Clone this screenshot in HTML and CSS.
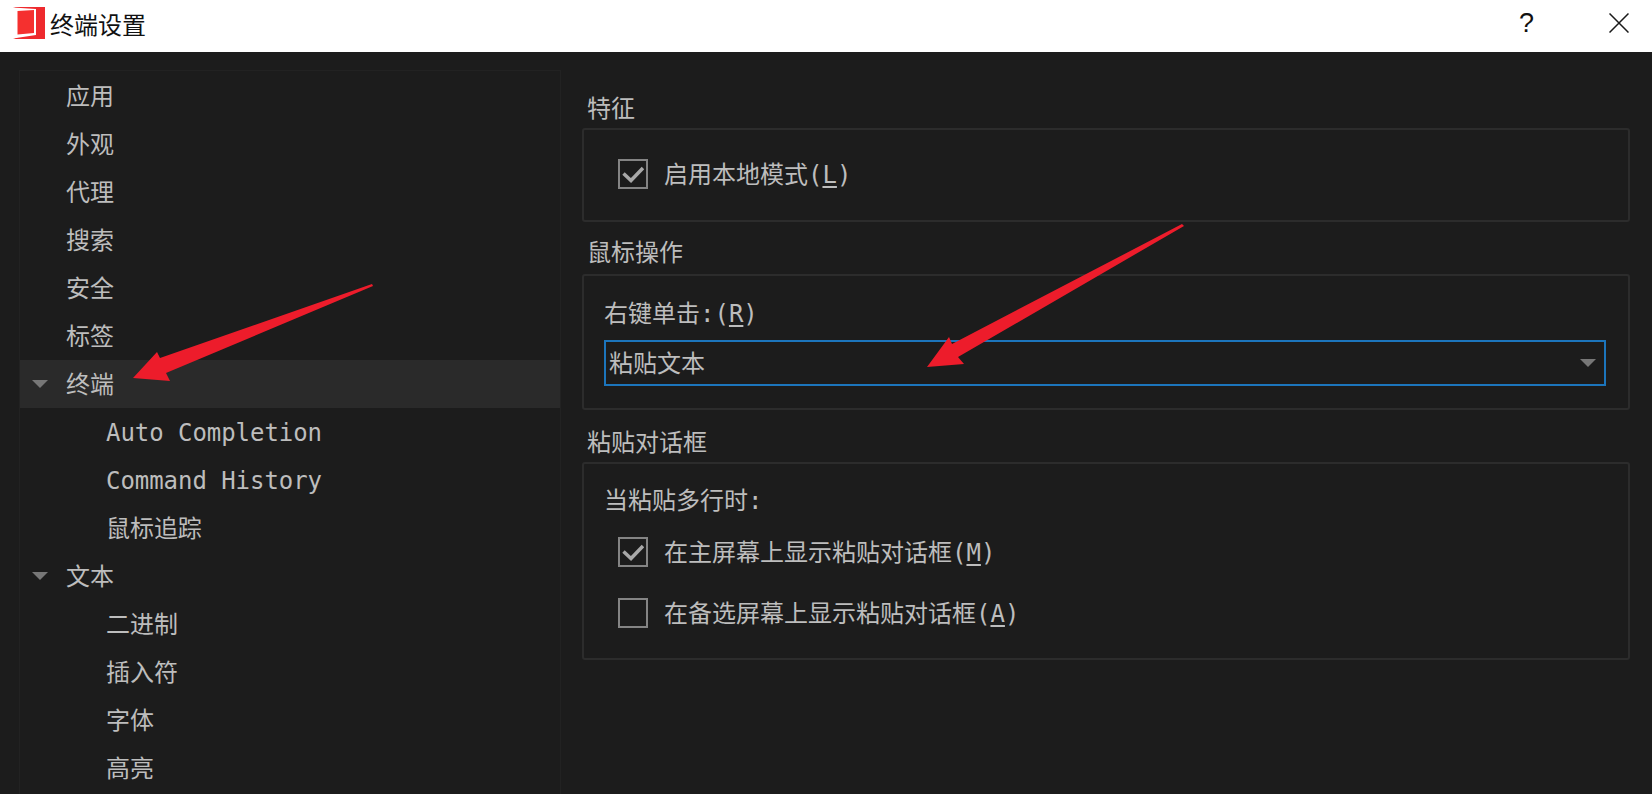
FILE: index.html
```html
<!DOCTYPE html>
<html>
<head>
	<meta charset="utf-8">
	<title>终端设置</title>
	<link rel="stylesheet" href="styles.css">
</head>
<body>
  <div class="titlebar">
    <svg class="logo" width="34" height="34" viewBox="0 0 34 34">
      <path d="M1 1H33V33H1L6 31V3Z" fill="#ee2a2e"/>
      <path d="M1 1.500L24 3V29L1 32.500L5 29V4Z" fill="#ffffff"/>
      <path d="M5.500 5L22 4V27L5.500 28.500Z" fill="#f5302f"/>
    </svg>
    <span class="title">终端设置</span>
    <span class="help">?</span>
    <svg class="close" width="20" height="20" viewBox="0 0 20 20">
      <path d="M0.500 0.500L19.500 19.500M19.500 0.500L0.500 19.500" stroke="#1a1a1a" stroke-width="1.500" fill="none"/>
    </svg>
  </div>

  <div class="content">
    <ul class="tree">
      <li>应用</li>
      <li>外观</li>
      <li>代理</li>
      <li>搜索</li>
      <li>安全</li>
      <li>标签</li>
      <li class="open current">终端</li>
      <li class="sub">Auto Completion</li>
      <li class="sub">Command History</li>
      <li class="sub">鼠标追踪</li>
      <li class="open">文本</li>
      <li class="sub">二进制</li>
      <li class="sub">插入符</li>
      <li class="sub">字体</li>
      <li class="sub">高亮</li>
    </ul>

    <div class="panel">
      <div class="group-title first">特征</div>
      <div class="group group-features">
        <label class="check">
          <span class="box checked">
            <svg width="22" height="18" viewBox="0 0 22 18"><path d="M1.500 8.500L9 15.500L21 3" stroke="#a8a8a8" stroke-width="3.500" fill="none"/></svg>
          </span>
          <span class="check-text">启用本地模式(<u>L</u>)</span>
        </label>
      </div>

      <div class="group-title">鼠标操作</div>
      <div class="group group-mouse">
        <div class="field-label">右键单击:(<u>R</u>)</div>
        <div class="combo">
          <span class="combo-text">粘贴文本</span>
          <span class="combo-arrow"></span>
        </div>
      </div>

      <div class="group-title">粘贴对话框</div>
      <div class="group group-paste">
        <div class="field-label">当粘贴多行时:</div>
        <label class="check">
          <span class="box checked">
            <svg width="22" height="18" viewBox="0 0 22 18"><path d="M1.500 8.500L9 15.500L21 3" stroke="#a8a8a8" stroke-width="3.500" fill="none"/></svg>
          </span>
          <span class="check-text">在主屏幕上显示粘贴对话框(<u>M</u>)</span>
        </label>
        <label class="check">
          <span class="box"></span>
          <span class="check-text">在备选屏幕上显示粘贴对话框(<u>A</u>)</span>
        </label>
      </div>
    </div>
  </div>

  <!-- red annotation arrows drawn over the dialog -->
  <svg class="arrows" width="1652" height="794" viewBox="0 0 1652 794">
    <path d="M372 284L373 286L166 373L170 381L133 378L157 352L160 358Z" fill="#ed1c2b"/>
    <path d="M1182 224L1184 226L958 357L964 364L927 367L949 337L952 344Z" fill="#ed1c2b"/>
  </svg>
</body>
</html>
```

FILE: styles.css
```css
html, body {
	height: 794px;
	overflow: hidden;
}
body {
	font-family: "DejaVu Sans Mono", "Noto Sans CJK SC", monospace;
	font-size: 24px;
	margin: 0;
	padding: 0;
	background: #1c1c1c;
	color: #bdbdbd;
}
.titlebar {
	display: flex;
	align-items: center;
	box-sizing: border-box;
	height: 52px;
	padding-bottom: 6px;
	background: #ffffff;
	color: #111111;
}
.logo {
	margin-left: 12px;
	flex: none;
}
.title {
	margin-left: 4px;
	flex: 1;
	font-family: "Noto Sans CJK SC", sans-serif;
}
.help {
	font-family: "Liberation Sans", sans-serif;
	font-size: 27px;
	margin-right: 75px;
}
.close {
	margin-right: 23px;
}
.content {
	display: flex;
	padding: 18px 22px 0 19px;
}
.tree {
	list-style: none;
	margin: 0;
	padding: 1px 0 0;
	width: 542px;
	height: 724px;
	flex: none;
	box-sizing: border-box;
	border: 1px solid #222222;
	border-bottom: 0;
	overflow: hidden;
}
.tree li {
	position: relative;
	height: 48px;
	line-height: 51px;
	padding-left: 46px;
}
.tree li.sub {
	padding-left: 86px;
	letter-spacing: -0.05px;
}
.tree li.current {
	background: #2a2a2a;
}
.tree li.open::before {
	content: "";
	position: absolute;
	left: 12px;
	top: 20px;
	border-left: 8px solid transparent;
	border-right: 8px solid transparent;
	border-top: 8px solid #777777;
}
.panel {
	flex: 1;
	margin-left: 21px;
}
.group-title {
	height: 44px;
	line-height: 47px;
	padding-left: 5px;
	margin-top: 8px;
}
.group-title.first {
	margin-top: 0;
	height: 38px;
	line-height: 38px;
	padding-top: 20px;
}
.group {
	box-sizing: border-box;
	border: 2px solid #2c2c2c;
	border-radius: 3px;
}
.group-features {
	height: 94px;
	padding: 29px 0 0 34px;
}
.group-mouse {
	height: 136px;
	margin-bottom: 8px;
	padding: 20px 22px 0 20px;
}
.group-paste {
	height: 198px;
	padding: 19px 0 0 20px;
}
.group-mouse + .group-title {
	margin-top: 0;
	line-height: 50px;
}
.field-label {
	height: 36px;
	line-height: 36px;
}
.check {
	display: flex;
	align-items: center;
	gap: 16px;
	height: 30px;
}
.check-text {
	margin-bottom: 4px;
}
.group-paste .check {
	margin: 18px 0 0 14px;
}
.group-paste .check + .check {
	margin-top: 31px;
}
.box {
	display: flex;
	align-items: center;
	justify-content: center;
	box-sizing: border-box;
	width: 30px;
	height: 30px;
	border: 2px solid #848484;
	flex: none;
}
.combo {
	display: flex;
	align-items: center;
	justify-content: space-between;
	box-sizing: border-box;
	height: 46px;
	margin-top: 8px;
	padding: 0 8px 0 3px;
	border: 2px solid #1c75bc;
}
.combo-text {
	margin-bottom: 3px;
}
.combo-arrow {
	border-left: 8px solid transparent;
	border-right: 8px solid transparent;
	border-top: 8px solid #777777;
}
u {
	text-underline-offset: 3px;
}
.arrows {
	position: absolute;
	left: 0;
	top: 0;
	pointer-events: none;
}
```
